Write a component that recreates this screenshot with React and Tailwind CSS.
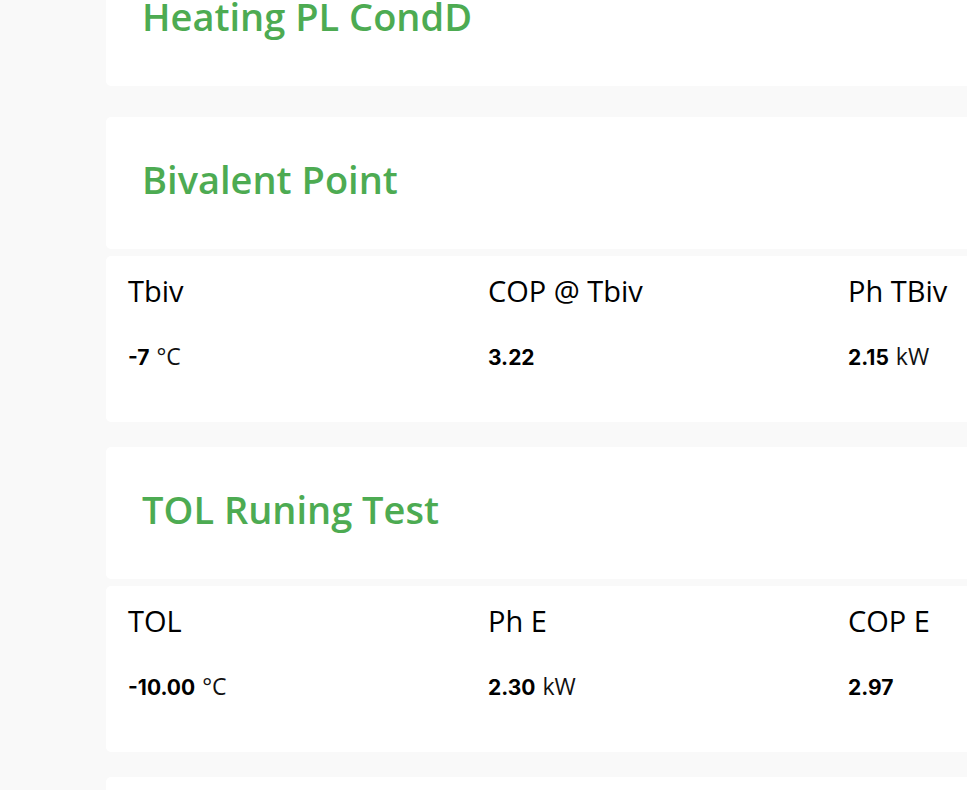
const sections = [
  { title: 'Heating PL CondD', items: null },
  {
    title: 'Bivalent Point',
    items: [
      { label: 'Tbiv', value: '-7', unit: '°C' },
      { label: 'COP @ Tbiv', value: '3.22', unit: '' },
      { label: 'Ph TBiv', value: '2.15', unit: 'kW' },
    ],
  },
  {
    title: 'TOL Runing Test',
    items: [
      { label: 'TOL', value: '-10.00', unit: '°C' },
      { label: 'Ph E', value: '2.30', unit: 'kW' },
      { label: 'COP E', value: '2.97', unit: '' },
    ],
  },
  { title: '', items: null },
]

function HeadingCard({ title }) {
  return (
    <div className="h-[132px] rounded-[5px] bg-white pl-[36px] pt-[39px]">
      <h2 className="text-[38px] leading-[46px] font-semibold text-[#4dab52]">{title}</h2>
    </div>
  )
}

function DataCard({ items }) {
  return (
    <div className="mt-[7px] h-[166px] rounded-[5px] bg-white px-[22px] pt-[18px]">
      <div className="grid grid-cols-[360px_360px_360px]">
        {items.map((item) => (
          <div key={item.label}>
            <div className="text-[29px] leading-[34px] text-black">{item.label}</div>
            <div className="mt-[36px] h-[28px] text-[20px] leading-[28px] text-black">
              <span className="font-bold font-['Inter',sans-serif] text-[21px] leading-none">{item.value}</span>
              {item.unit && <span className="ml-[7px] text-[23px] leading-none text-[#111]">{item.unit}</span>}
            </div>
          </div>
        ))}
      </div>
    </div>
  )
}

export default function App() {
  return (
    <div className="h-[790px] w-[967px] overflow-hidden bg-[#f9f9f9] font-['Open_Sans',sans-serif]">
      <div className="flex">
        {/* empty sidebar column */}
        <div className="w-[106px] shrink-0" />
        <main className="-mt-[46px] flex w-[1100px] shrink-0 flex-col gap-[31px]">
          {sections.map((s, i) => (
            <section key={i} className={i > 1 ? '-mt-[6px]' : ''}>
              <HeadingCard title={s.title} />
              {s.items && <DataCard items={s.items} />}
            </section>
          ))}
        </main>
      </div>
    </div>
  )
}
